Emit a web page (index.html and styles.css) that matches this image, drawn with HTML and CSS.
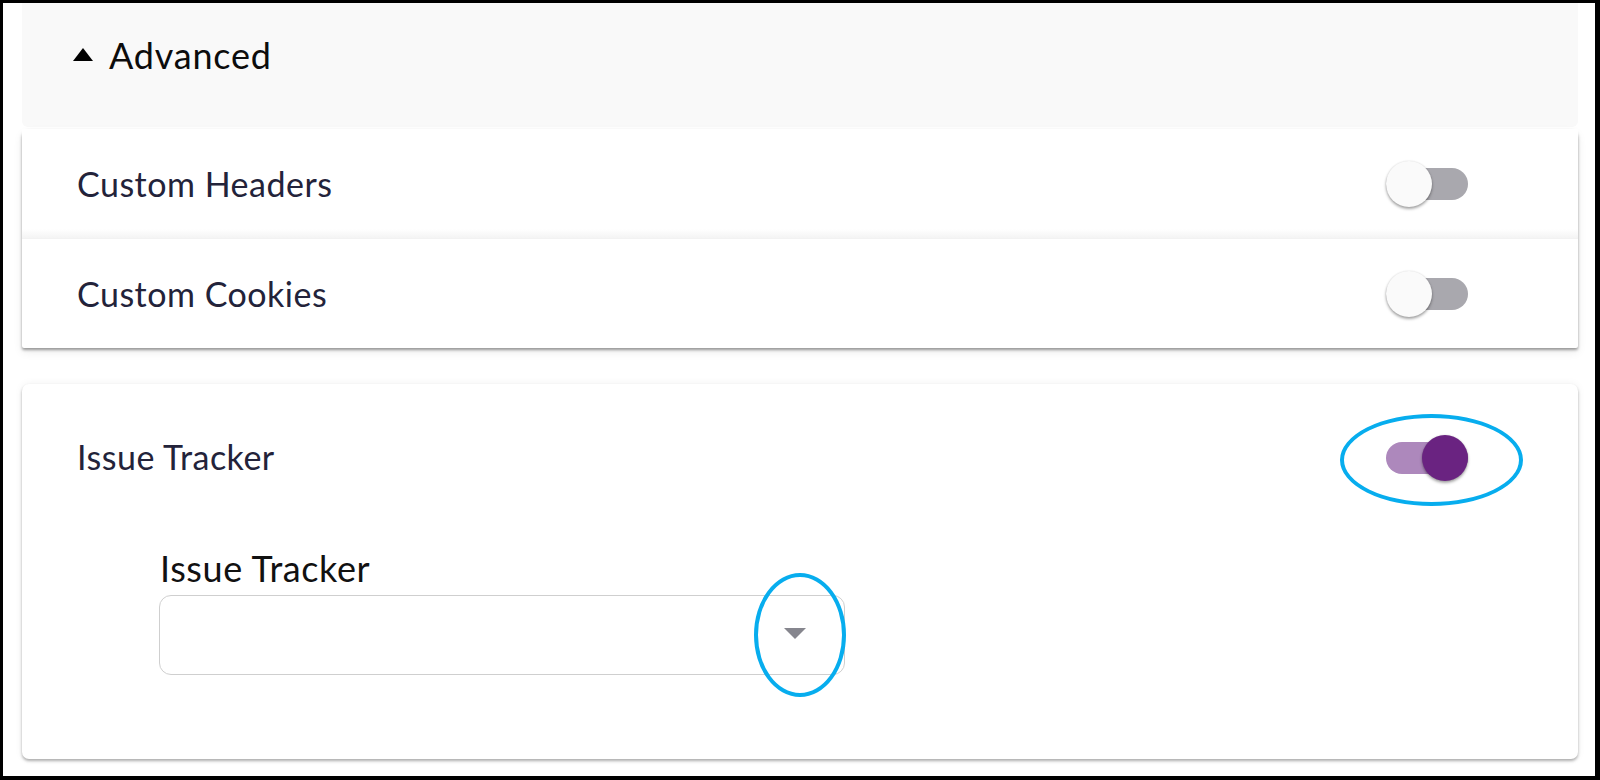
FILE: index.html
```html
<!DOCTYPE html>
<html lang="en">
<head>
<meta charset="utf-8">
<title>Advanced settings</title>
<link rel="stylesheet" href="styles.css">
</head>
<body>
<div class="frame">
  <div class="content">
    <div class="adv-header">
      <span class="caret-up"></span>
      <span class="adv-title">Advanced</span>
    </div>

    <div class="card card-rows">
      <div class="row">
        <span class="row-label">Custom Headers</span>
        <span class="switch">
          <span class="track"></span>
          <span class="thumb"></span>
        </span>
      </div>
      <div class="row row-second">
        <span class="row-label">Custom Cookies</span>
        <span class="switch">
          <span class="track"></span>
          <span class="thumb"></span>
        </span>
      </div>
    </div>

    <div class="card card-issue">
      <div class="row row-issue">
        <span class="row-label">Issue Tracker</span>
        <span class="switch switch-on">
          <span class="track"></span>
          <span class="thumb"></span>
          <span class="mark mark-switch"></span>
        </span>
      </div>
      <div class="field">
        <div class="field-label">Issue Tracker</div>
        <div class="select">
          <span class="select-arrow"></span>
          <span class="mark mark-select"></span>
        </div>
      </div>
    </div>
  </div>
</div>
</body>
</html>
```

FILE: styles.css
```css
* { box-sizing: border-box; }

html, body {
  margin: 0;
  padding: 0;
  background: #ffffff;
}

body {
  font-family: "Lato", "Noto Sans", sans-serif;
  color: #111;
}

.frame {
  width: 1600px;
  height: 780px;
  border-top: 3px solid #000;
  border-left: 3px solid #000;
  border-right: 5px solid #000;
  border-bottom: 4px solid #000;
  background: #fff;
  overflow: hidden;
}

.content {
  display: flex;
  flex-direction: column;
  padding: 0 17px 0 19px;
}

/* Advanced header panel */
.adv-header {
  height: 124px;
  background: #f9f9f9;
  border-radius: 0 0 6px 6px;
  display: flex;
  align-items: flex-start;
  gap: 16px;
  padding: 32px 0 0 51px;
}

.caret-up {
  width: 0;
  height: 0;
  border-left: 10.5px solid transparent;
  border-right: 10.5px solid transparent;
  border-bottom: 13px solid #000;
  margin-top: 13px;
}

.adv-title {
  font-size: 36px;
  letter-spacing: 0.8px;
  color: #0c0c0c;
  line-height: 40px;
}

/* cards */
.card {
  background: #fff;
  border-radius: 7px;
}

.card-rows {
  margin-top: 2px;
  border-radius: 7px 7px 2px 2px;
  box-shadow: 0 2px 3px rgba(0, 0, 0, 0.38), 0 4px 10px rgba(0, 0, 0, 0.08);
}

.row {
  height: 110px;
  display: flex;
  align-items: center;
  justify-content: space-between;
  padding: 0 110px 0 55px;
  position: relative;
}

.row-second {
  border-top: 1px solid #f2f2f2;
  height: 110px;
}

.card-rows .row:first-child {
  height: 109px;
  background: linear-gradient(to bottom, #fff 0, #fff 100px, #f4f4f4 109px);
}

.row-label {
  font-size: 34px;
  letter-spacing: 0.5px;
  color: #23233a;
  line-height: 40px;
}

.card-issue {
  margin-top: 36px;
  height: 375px;
  box-shadow: 0 2px 3px rgba(0, 0, 0, 0.3), 0 0 8px rgba(0, 0, 0, 0.06);
}

.row-issue {
  height: 148px;
}

.row-issue .row-label {
  margin-top: -3px;
}

/* switch */
.switch {
  position: relative;
  width: 82px;
  height: 46px;
  flex: none;
}

.track {
  position: absolute;
  left: 0;
  top: 7px;
  width: 82px;
  height: 32px;
  border-radius: 16px;
  background: #a9a8ae;
}

.thumb {
  position: absolute;
  left: 0;
  top: 0;
  width: 46px;
  height: 46px;
  border-radius: 50%;
  background: #fafafa;
  box-shadow: 0 2px 3px rgba(0, 0, 0, 0.35), 0 0 2px rgba(0, 0, 0, 0.12);
}

.switch-on .track {
  background: #ad88bc;
}

.switch-on .thumb {
  left: 36px;
  background: #6a2381;
}

/* annotation ellipses */
.mark {
  position: absolute;
  border: 4px solid #07adee;
  border-radius: 50%;
  pointer-events: none;
}

.mark-switch {
  left: -46px;
  top: -21px;
  width: 183px;
  height: 92px;
}

.mark-select {
  left: 594px;
  top: -23px;
  width: 92px;
  height: 124px;
}

/* field */
.field {
  padding-left: 137px;
  margin-top: 16px;
  display: flex;
  flex-direction: column;
}

.field-label {
  font-size: 36px;
  letter-spacing: 0.6px;
  line-height: 40px;
  color: #111;
  padding-left: 1px;
  margin-bottom: 7px;
}

.select {
  position: relative;
  width: 686px;
  height: 80px;
  border: 1.5px solid #cfcfcf;
  border-radius: 12px;
}

.select-arrow {
  position: absolute;
  right: 38px;
  top: 32px;
  width: 0;
  height: 0;
  border-left: 11px solid transparent;
  border-right: 11px solid transparent;
  border-top: 11px solid #86868e;
}
```
